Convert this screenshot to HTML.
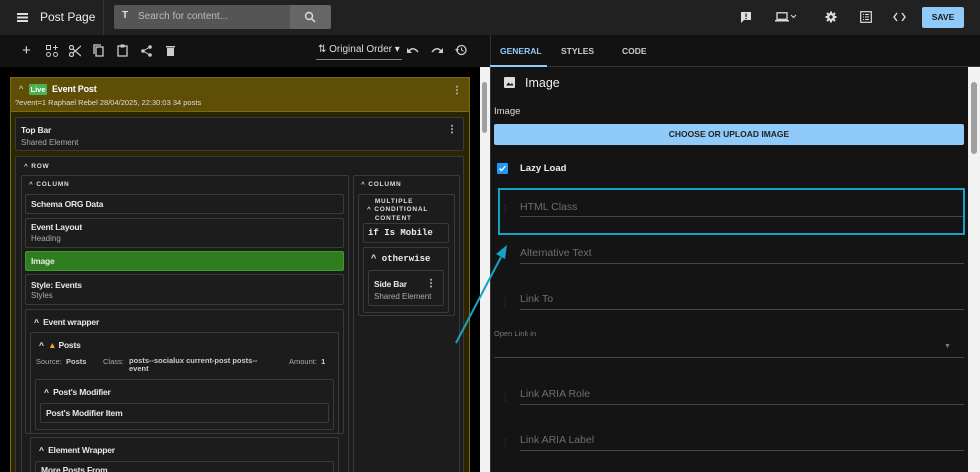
<!DOCTYPE html>
<html style="overflow:hidden;width:980px;height:472px"><head><meta charset="utf-8"><style>
*{box-sizing:border-box;margin:0;padding:0}
body{width:980px;height:472px;overflow:hidden;background:#000;font-family:"Liberation Sans",sans-serif;color:#e0e0e0;position:relative;font-size:9px}
.a{position:absolute}
.card{position:absolute;background:#1c1c1c;border:1px solid #3a3a3a;border-radius:2px}
.t{font-weight:bold;font-size:8.5px;color:#e8e8e8;letter-spacing:-0.2px}
.s{font-size:8px;color:#aaa}
.cap{font-size:6.5px;font-weight:bold;letter-spacing:0.8px;color:#ddd}
.lbl{position:absolute;font-size:10.5px;color:#6e6e6e}
.ln{position:absolute;height:1px;background:#444}
.dots{position:absolute;width:2px;height:10px;background:radial-gradient(circle,#aaa 0.9px,transparent 1.1px) 0 0/2px 3.4px}
.ddots{position:absolute;width:2px;height:10px;background:radial-gradient(circle,#222 0.9px,transparent 1.1px) 0 0/2px 3.4px}
svg{position:absolute}
</style></head><body>
<div class="a" style="left:0;top:0;width:980px;height:35px;background:#212121"></div>
<div class="a" style="left:103px;top:0;width:1px;height:35px;background:#333"></div>
<div class="a" style="left:17px;top:13px;width:11px;height:1.5px;background:#ddd;box-shadow:0 3.5px #ddd,0 7px #ddd"></div>
<div class="a" style="left:40px;top:10px;font-size:12px;color:#eee">Post Page</div>
<div class="a" style="left:114px;top:5px;width:176px;height:24px;background:#555;border-radius:2px 0 0 2px"></div>
<div class="a" style="left:290px;top:5px;width:41px;height:24px;background:#666;border-radius:0 2px 2px 0"></div>
<div class="a" style="left:122px;top:10px;font-weight:bold;font-size:10px;color:#ddd">T</div>
<div class="a" style="left:138px;top:11px;font-size:10px;color:#bbb">Search for content...</div>
<svg style="left:304px;top:11px" width="12" height="12" viewBox="0 0 12 12"><circle cx="5" cy="5" r="3.5" stroke="#ddd" stroke-width="1.4" fill="none"/><path d="M7.5 7.5L11 11" stroke="#ddd" stroke-width="1.5"/></svg>
<svg style="left:740px;top:11px" width="12" height="12"><path d="M1 1h10v8H4l-3 3z" fill="#ddd"/><rect x="5.4" y="2.5" width="1.3" height="3.5" fill="#212121"/><rect x="5.4" y="7" width="1.3" height="1.2" fill="#212121"/></svg>
<svg style="left:775px;top:12px" width="22" height="10"><rect x="2" y="0.8" width="10" height="6.5" stroke="#ddd" stroke-width="1.3" fill="none"/><rect x="0" y="8" width="14" height="1.5" fill="#ddd"/><path d="M16 3l2.5 2.5L21 3" stroke="#ddd" stroke-width="1" fill="none"/></svg>
<svg style="left:825px;top:11px" width="12" height="12" viewBox="0 0 12 12"><circle cx="6" cy="6" r="4" fill="#ddd"/><path d="M6 0.5v11M0.5 6h11M2 2l8 8M10 2l-8 8" stroke="#ddd" stroke-width="2"/><circle cx="6" cy="6" r="1.7" fill="#212121"/></svg>
<svg style="left:860px;top:11px" width="12" height="12"><rect x="0.7" y="0.7" width="10.6" height="10.6" fill="none" stroke="#ddd" stroke-width="1.2"/><path d="M3 3.5h1M5 3.5h4M3 6h1M5 6h4M3 8.5h1M5 8.5h4" stroke="#ddd" stroke-width="1.1"/></svg>
<svg style="left:893px;top:12px" width="13" height="10"><path d="M4 1L1 5l3 4M9 1l3 4-3 4" stroke="#ddd" stroke-width="1.4" fill="none"/></svg>
<div class="a" style="left:922px;top:7px;width:42px;height:21px;background:#90caf9;border-radius:2px;color:#1a1a1a;font-size:8.5px;font-weight:bold;text-align:center;line-height:21px">SAVE</div>
<div class="a" style="left:0;top:35px;width:980px;height:32px;background:#121212"></div>
<div class="a" style="left:22px;top:42px;font-size:15px;color:#ddd">+</div>
<svg style="left:46px;top:45px" width="12" height="12"><rect x="0.5" y="0.5" width="4" height="4" fill="none" stroke="#ccc"/><circle cx="2.5" cy="9.5" r="2" fill="none" stroke="#ccc"/><circle cx="9.5" cy="9.5" r="2" fill="none" stroke="#ccc"/><path d="M9.5 0v5M7 2.5h5" stroke="#ccc"/></svg>
<svg style="left:69px;top:45px" width="12" height="12"><circle cx="2.5" cy="9.5" r="2" fill="none" stroke="#ccc" stroke-width="1.2"/><circle cx="2.5" cy="2.5" r="2" fill="none" stroke="#ccc" stroke-width="1.2"/><path d="M4 4l8 7M4 8l8-7" stroke="#ccc" stroke-width="1.2"/></svg>
<svg style="left:93px;top:44px" width="11" height="13"><rect x="3" y="3" width="7" height="9" fill="none" stroke="#ccc" stroke-width="1.3"/><path d="M1 10V1h7" stroke="#ccc" stroke-width="1.3" fill="none"/></svg>
<svg style="left:117px;top:44px" width="11" height="13"><rect x="1" y="2" width="9" height="10" fill="none" stroke="#ccc" stroke-width="1.3"/><rect x="3.5" y="0.5" width="4" height="3" fill="#ccc"/></svg>
<svg style="left:141px;top:45px" width="11" height="12"><circle cx="9" cy="2" r="1.8" fill="#ccc"/><circle cx="2" cy="6" r="1.8" fill="#ccc"/><circle cx="9" cy="10" r="1.8" fill="#ccc"/><path d="M9 2L2 6l7 4" stroke="#ccc" fill="none"/></svg>
<svg style="left:166px;top:45px" width="9" height="11"><rect x="0" y="1" width="9" height="1.5" fill="#ccc"/><rect x="1" y="3" width="7" height="8" fill="#ccc"/></svg>
<div class="a" style="left:316px;top:59px;width:86px;height:1px;background:#888"></div>
<div class="a" style="left:318px;top:44px;font-size:10px;color:#ddd">⇅ Original Order ▾</div>
<svg style="left:407px;top:46px" width="12" height="8"><path d="M2 5q4-5 9 1" stroke="#ccc" stroke-width="1.5" fill="none"/><path d="M0 2v5h5z" fill="#ccc"/></svg>
<svg style="left:431px;top:46px" width="12" height="8"><path d="M10 5q-4-5-9 1" stroke="#ccc" stroke-width="1.5" fill="none"/><path d="M12 2v5H7z" fill="#ccc"/></svg>
<svg style="left:455px;top:44px" width="12" height="12"><circle cx="6.5" cy="6" r="4.5" fill="none" stroke="#ccc" stroke-width="1.3"/><path d="M6.5 3.5V6l2 1.3" stroke="#ccc" fill="none"/><path d="M0 5h4L2 8z" fill="#ccc"/></svg>
<div class="a" style="left:490px;top:35px;width:1px;height:437px;background:#333"></div>
<div class="a" style="left:500px;top:46px;font-size:8.5px;font-weight:bold;color:#90caf9">GENERAL</div>
<div class="a" style="left:561px;top:46px;font-size:8.5px;font-weight:bold;color:#ccc">STYLES</div>
<div class="a" style="left:622px;top:46px;font-size:8.5px;font-weight:bold;color:#ccc">CODE</div>
<div class="a" style="left:490px;top:65px;width:57px;height:2px;background:#90caf9"></div>
<div class="a" style="left:547px;top:66px;width:433px;height:1px;background:#333"></div>
<div class="a" style="left:480px;top:67px;width:10px;height:405px;background:#f2f2f2"></div>
<div class="a" style="left:482px;top:82px;width:5px;height:51px;background:#a0a0a0;border-radius:3px"></div>
<div class="a" style="left:10px;top:77px;width:460px;height:395px;background:#2b2600;border:1px solid #7a6a10;border-bottom:none"></div>
<div class="a" style="left:11px;top:78px;width:458px;height:34px;background:#5f4f06;border-bottom:1px solid #7a6a10"></div>
<div class="a" style="left:19px;top:84px;font-size:9px;color:#ddd">^</div>
<div class="a" style="left:29px;top:84px;width:18px;height:11px;background:#4caf50;font-size:7.5px;font-weight:bold;color:#fff;text-align:center;line-height:11px;border-radius:1px">Live</div>
<div class="a t" style="left:52px;top:84px;font-size:9px;color:#fff">Event Post</div>
<div class="a" style="left:15px;top:98px;font-size:7.5px;color:#ddd">?event=1 Raphael Rebel 28/04/2025, 22:30:03 34 posts</div>
<div class="dots" style="left:456px;top:85px"></div>
<div class="card" style="left:15px;top:117px;width:449px;height:34px"></div>
<div class="a t" style="left:21px;top:125px">Top Bar</div>
<div class="a s" style="left:21px;top:138px">Shared Element</div>
<div class="dots" style="left:451px;top:124px"></div>
<div class="card" style="left:15px;top:156px;width:449px;height:320px"></div>
<div class="a cap" style="left:24px;top:163px">^ ROW</div>
<div class="card" style="left:21px;top:175px;width:328px;height:300px"></div>
<div class="a cap" style="left:29px;top:181px">^ COLUMN</div>
<div class="card" style="left:25px;top:194px;width:319px;height:20px"></div>
<div class="a t" style="left:31px;top:199px">Schema ORG Data</div>
<div class="card" style="left:25px;top:218px;width:319px;height:30px"></div>
<div class="a t" style="left:31px;top:222px">Event Layout</div>
<div class="a s" style="left:31px;top:234px">Heading</div>
<div class="a" style="left:25px;top:251px;width:319px;height:20px;background:#2e7d1f;border:1px solid #3d9a2c;border-radius:2px"></div>
<div class="a t" style="left:31px;top:256px">Image</div>
<div class="card" style="left:25px;top:274px;width:319px;height:31px"></div>
<div class="a t" style="left:31px;top:280px">Style: Events</div>
<div class="a s" style="left:31px;top:291px">Styles</div>
<div class="card" style="left:25px;top:309px;width:319px;height:125px"></div>
<div class="a t" style="left:34px;top:317px">^ &nbsp;Event wrapper</div>
<div class="card" style="left:30px;top:332px;width:309px;height:102px"></div>
<div class="a t" style="left:39px;top:340px">^ &nbsp;<span style="color:#f5a623">▲</span> Posts</div>
<div class="a s" style="left:36px;top:357px;font-size:7.5px">Source: <b style="color:#ccc">&nbsp;Posts</b></div>
<div class="a s" style="left:103px;top:357px;font-size:7.5px">Class:</div>
<div class="a" style="left:129px;top:357px;font-size:7.5px;font-weight:bold;color:#ccc;width:130px;line-height:8px">posts--socialux current-post posts--event</div>
<div class="a s" style="left:289px;top:357px;font-size:7.5px">Amount: <b style="color:#ccc">&nbsp;1</b></div>
<div class="card" style="left:35px;top:379px;width:299px;height:51px"></div>
<div class="a t" style="left:44px;top:387px">^ &nbsp;Post's Modifier</div>
<div class="card" style="left:40px;top:403px;width:289px;height:20px"></div>
<div class="a t" style="left:46px;top:408px">Post's Modifier Item</div>
<div class="card" style="left:30px;top:437px;width:309px;height:40px"></div>
<div class="a t" style="left:39px;top:445px">^ &nbsp;Element Wrapper</div>
<div class="card" style="left:35px;top:461px;width:299px;height:20px"></div>
<div class="a t" style="left:41px;top:465px">More Posts From</div>
<div class="card" style="left:353px;top:175px;width:107px;height:300px"></div>
<div class="a cap" style="left:361px;top:181px">^ COLUMN</div>
<div class="card" style="left:358px;top:194px;width:97px;height:122px"></div>
<div class="a cap" style="left:367px;top:198px;line-height:8.3px">&nbsp;&nbsp;&nbsp;MULTIPLE<br>^ CONDITIONAL<br>&nbsp;&nbsp;&nbsp;CONTENT</div>
<div class="card" style="left:363px;top:223px;width:86px;height:20px"></div>
<div class="a" style="left:368px;top:228px;font-family:'Liberation Mono',monospace;font-weight:bold;font-size:9px;color:#eee">if Is Mobile</div>
<div class="card" style="left:363px;top:247px;width:86px;height:66px"></div>
<div class="a" style="left:371px;top:254px;font-family:'Liberation Mono',monospace;font-weight:bold;font-size:9px;color:#eee">^ otherwise</div>
<div class="card" style="left:368px;top:270px;width:76px;height:36px"></div>
<div class="a t" style="left:374px;top:279px">Side Bar</div>
<div class="a s" style="left:374px;top:292px">Shared Element</div>
<div class="dots" style="left:430px;top:278px"></div>
<div class="a" style="left:491px;top:67px;width:477px;height:405px;background:#141414"></div>
<div class="a" style="left:968px;top:67px;width:12px;height:405px;background:#f2f2f2"></div>
<div class="a" style="left:971px;top:82px;width:6px;height:72px;background:#a0a0a0;border-radius:3px"></div>
<svg style="left:504px;top:77px" width="11" height="11"><rect width="11" height="11" rx="1" fill="#ddd"/><path d="M2 8.5l2.5-3 2 2 1.5-1.5 1.5 2.5z" fill="#141414"/></svg>
<div class="a" style="left:525px;top:76px;font-size:12.5px;color:#eee">Image</div>
<div class="a" style="left:494px;top:106px;font-size:9.5px;color:#ddd">Image</div>
<div class="a" style="left:494px;top:124px;width:470px;height:21px;background:#90caf9;border-radius:2px;color:#222;font-size:8.5px;font-weight:bold;text-align:center;line-height:21px">CHOOSE OR UPLOAD IMAGE</div>
<div class="a" style="left:497px;top:163px;width:11px;height:11px;background:#2196f3;border-radius:1px"></div>
<svg style="left:497px;top:163px" width="11" height="11"><path d="M2.5 5.5l2 2 4-4.5" stroke="#fff" stroke-width="1.3" fill="none"/></svg>
<div class="a" style="left:520px;top:163px;font-size:9.5px;color:#eee;font-weight:bold">Lazy Load</div>
<div class="a" style="left:498px;top:188px;width:467px;height:47px;border:2px solid #16a2c6"></div>
<div class="lbl" style="left:520px;top:201px">HTML Class</div><div class="ln" style="left:520px;top:216px;width:443px"></div><div class="ddots" style="left:504px;top:204px"></div>
<div class="lbl" style="left:520px;top:247px">Alternative Text</div><div class="ln" style="left:520px;top:263px;width:444px"></div>
<div class="lbl" style="left:520px;top:293px">Link To</div><div class="ln" style="left:520px;top:309px;width:444px"></div><div class="ddots" style="left:504px;top:297px"></div>
<div class="a" style="left:494px;top:329px;font-size:7.5px;color:#777">Open Link in</div>
<div class="a" style="left:944px;top:343px;font-size:7px;color:#777">▼</div>
<div class="ln" style="left:494px;top:357px;width:470px"></div>
<div class="lbl" style="left:520px;top:388px">Link ARIA Role</div><div class="ln" style="left:520px;top:404px;width:444px"></div><div class="ddots" style="left:504px;top:392px"></div>
<div class="lbl" style="left:520px;top:434px">Link ARIA Label</div><div class="ln" style="left:520px;top:450px;width:444px"></div><div class="ddots" style="left:504px;top:438px"></div>
<svg style="left:440px;top:230px" width="80" height="120"><path d="M16 113L61 27" stroke="#16a2c6" stroke-width="2"/><path d="M67 15L56 24l9 5z" fill="#16a2c6"/></svg>
</body></html>
